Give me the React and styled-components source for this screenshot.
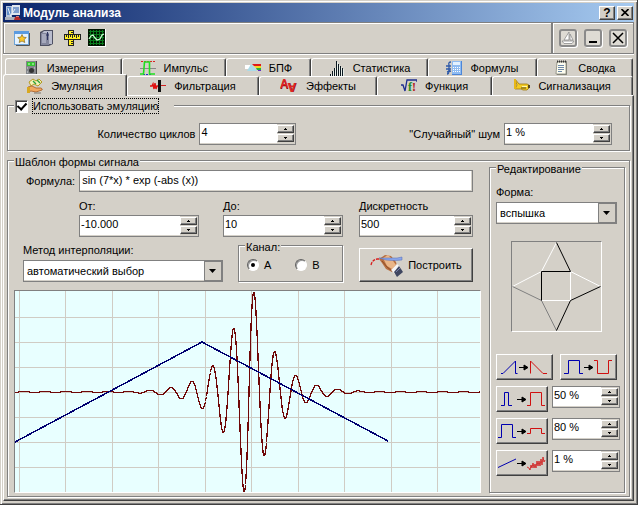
import React, { useState } from 'react';
import styled, { createGlobalStyle } from 'styled-components';

const GlobalStyle = createGlobalStyle`
  * {
    box-sizing: border-box;
  }

  body {
    margin: 0;
    background: #d4d0c8;
    color: #000;
    font-family: 'Liberation Sans', Arial, sans-serif;
    font-size: 11px;
    line-height: 14px;
  }

  button, input, select {
    font: inherit;
    color: inherit;
    margin: 0;
  }
`;

/* ---------- icons ---------- */

const Icon = ({ w = 16, h = 16, children }) => (
  <svg width={w} height={h} viewBox={`0 0 ${w} ${h}`} aria-hidden="true">{children}</svg>
);

const AppIcon = () => (
  <Icon>
    <rect x="1" y="1" width="6" height="11" fill="#b9c6dc" />
    <rect x="2" y="2" width="4" height="8" fill="#5f8cc8" />
    <rect x="7" y="0" width="8" height="10" fill="#dfe5ee" />
    <rect x="8" y="2" width="6" height="6" fill="#7f9fd0" />
    <path d="M0 12h11l1 3H0z" fill="#a9b0bd" />
    <path d="M3 3l3 9M6 10l4-6" stroke="#e8eef8" />
    <path d="M9 15l1-3h4l2 3z" fill="#b52a2a" />
    <path d="M11 11.500h3" stroke="#d88080" />
  </Icon>
);

const StarIcon = () => (
  <Icon>
    <path d="M2 15.500h13.500V3" fill="none" stroke="#555" />
    <rect x="0.500" y="1.500" width="14" height="13" fill="#e6f3ff" stroke="#6fa3d6" />
    <rect x="0" y="1" width="15" height="3" fill="#5b9be0" />
    <path d="M8 4.500l1.300 2.700 3 .3-2.200 2 .7 3L8 11l-2.800 1.500.7-3-2.200-2 3-.3z" fill="#ffc928" stroke="#8a6a1c" strokeWidth=".7" />
  </Icon>
);

const BookIcon = () => (
  <Icon>
    <path d="M1 2l4-2h9v14l-4 2H1z" fill="#4e5062" />
    <path d="M2 3h8v12H2z" fill="#83869c" />
    <path d="M5 1h8v13h-3V3H3z" fill="#b9bccd" />
    <path d="M4 4v9M6 4v9" stroke="#c9ccdc" />
    <path d="M8.500 2v8M7 5h3" stroke="#2e3560" />
  </Icon>
);

const RulerIcon = () => (
  <Icon w={17} h={16}>
    <rect x="4.500" y="0.500" width="5" height="15" fill="#ffee22" stroke="#222" />
    <path d="M7 11.500h2M7 13.500h2M7 2.500h2" stroke="#222" />
    <rect x="0.500" y="4.500" width="16" height="5" fill="#ffee22" stroke="#222" />
    <path d="M2.500 5v2M4.500 5v3M6.500 5v2M8.500 5v3M10.500 5v2M12.500 5v3M14.500 5v2" stroke="#222" />
  </Icon>
);

const ScopeIcon = () => (
  <Icon w={18} h={18}>
    <rect width="18" height="18" fill="#fff" />
    <rect width="17" height="17" fill="#001400" />
    <path d="M2.500 1v15M5.500 1v15M8.500 1v15M11.500 1v15M14.500 1v15M1 2.500h15M1 5.500h15M1 8.500h15M1 11.500h15M1 14.500h15" stroke="#087c1c" />
    <path d="M1 10l2-3 2-1 2 3 2 2 3-1 2-4 2-1" fill="none" stroke="#c8ffd0" strokeWidth="1.300" />
  </Icon>
);

const BoatIcon = () => (
  <Icon w={14} h={14}>
    <path d="M8 1v8H3zM9 3l3 6H9z" fill="#fff" stroke="#8c8c8c" strokeWidth=".8" />
    <path d="M1 10h12l-2 2.500H3z" fill="#fff" stroke="#8c8c8c" strokeWidth=".8" />
  </Icon>
);

const MinimizeIcon = () => (
  <Icon w={14} h={14}>
    <path d="M3 11h8" stroke="#000" strokeWidth="2" />
  </Icon>
);

const CrossIcon = () => (
  <Icon w={14} h={14}>
    <path d="M2 2l10 10M12 2L2 12" stroke="#000" strokeWidth="1.500" />
  </Icon>
);

const MeterIcon = () => (
  <Icon>
    <rect x="3" y="1" width="11" height="14" fill="#444" />
    <rect x="3" y="1" width="10" height="13" fill="#83868a" />
    <rect x="4" y="2" width="8" height="4" fill="#35c52f" />
    <path d="M5 4h2M9 4h2" stroke="#d2ffd0" />
    <circle cx="8.500" cy="10.500" r="2.500" fill="#333" />
    <path d="M4 8h1M12 8h-1M4 12h1" stroke="#ddd" />
  </Icon>
);

const PulseIcon = () => (
  <Icon>
    <path d="M0 8.500h16" stroke="#888" />
    <path d="M1 1.500h14" stroke="#e02020" strokeDasharray="2 1" />
    <path d="M3 14.500h8" stroke="#2030d0" strokeDasharray="2 1" />
    <path d="M0 14h3.500L4.500 2h5v12H15" fill="none" stroke="#20e020" strokeWidth="1.600" />
  </Icon>
);

const PrismIcon = () => (
  <Icon>
    <path d="M0 5h5l5 4H0z" fill="#fff" />
    <path d="M6 4l6 7H2z" fill="#a9dbe8" />
    <path d="M7 4h9v2H9z" fill="#e01818" />
    <path d="M9 6h7v2h-5z" fill="#f0d820" />
    <path d="M11 8h5v2h-4z" fill="#28b040" />
    <path d="M13 10.500h3" stroke="#6030c0" />
  </Icon>
);

const BarsIcon = () => (
  <Icon>
    <path d="M1.500 16v-2M3.500 16v-5M5.500 16V8M7.500 16V1M9.500 16V4M11.500 16V6M13.500 16V8" stroke="#0c1820" />
    <path d="M2.500 16v-2M4.500 16v-5M6.500 16V8M8.500 16V2M10.500 16V5M12.500 16V7M14.500 16V9" stroke="#e9efe9" />
  </Icon>
);

const FormulaIcon = () => (
  <Icon>
    <rect x="6" y="1" width="10" height="14" fill="#4d86d8" />
    <rect x="6" y="1" width="9" height="13" fill="#8fbcf2" />
    <rect x="7" y="2" width="7" height="3" fill="#e4f2ff" />
    <path d="M7 7.500h7M7 9.500h7M7 11.500h7" stroke="#fff" strokeDasharray="1 1" />
    <path d="M5 2q-3 0-2 3v6q0 3-2 3M0 6h5M0 9h5M1 12l4-1" fill="none" stroke="#2c58a8" strokeWidth="1.300" />
  </Icon>
);

const NotesIcon = () => (
  <Icon>
    <path d="M3 1h10v14H3z" fill="#8a8a80" />
    <path d="M3 2h9v12H2z" fill="#fdfdf0" stroke="#77776c" strokeWidth=".7" />
    <path d="M3 1.500h9" stroke="#333" strokeWidth="2" strokeDasharray="1 1" />
    <path d="M4 5.500h6M4 7.500h6M4 9.500h6M4 11.500h4" stroke="#6d88a8" />
  </Icon>
);

const EmulationIcon = () => (
  <Icon>
    <path d="M2 4l4-3 3 2 3-2 3 3-4 4-4-2-3 2z" fill="#f5f3b8" stroke="#b59a22" />
    <path d="M6 3l3 3M10 2l3 3" stroke="#2da238" strokeWidth="1.300" />
    <path d="M1 9l4-1 4 2h5q2 1 1 2l-6 2-5-1-3 1z" fill="#f1a860" stroke="#a45c24" strokeWidth=".8" />
    <path d="M0 9h3v6H0z" fill="#d8a820" />
    <path d="M7 15h7" stroke="#7a7770" />
  </Icon>
);

const FilterIcon = () => (
  <Icon>
    <path d="M0 8h2l1-2 1 5 1-6 1 6 1-3h2" fill="none" stroke="#e01010" strokeWidth="1.400" />
    <path d="M11 7.500h5" stroke="#d02020" />
    <rect x="8" y="2" width="3" height="12" fill="#111" />
  </Icon>
);

const EffectsIcon = () => (
  <Icon w={18}>
    <text x="0" y="11" fontSize="12" fontWeight="700" fontFamily="Liberation Sans, sans-serif" fill="#901010">A</text>
    <text x="0" y="10" fontSize="12" fontWeight="700" fontFamily="Liberation Sans, sans-serif" fill="#e02424">A</text>
    <text x="-17" y="-5" fontSize="12" fontWeight="700" fontFamily="Liberation Sans, sans-serif" fill="#901010" transform="rotate(180)">A</text>
    <text x="-16" y="-5" fontSize="12" fontWeight="700" fontFamily="Liberation Sans, sans-serif" fill="#e02424" transform="rotate(180)">A</text>
  </Icon>
);

const FunctionIcon = () => (
  <Icon>
    <path d="M0 7h2l2 6 2-11h10v2" fill="none" stroke="#1c2c90" strokeWidth="1.300" />
    <text x="7" y="13" fontSize="12" fontWeight="700" fontFamily="Liberation Serif, serif" fill="#1b8c28">f</text>
    <text x="11" y="13" fontSize="12" fontWeight="700" fontFamily="Liberation Serif, serif" fill="#b01818">!</text>
  </Icon>
);

const HornIcon = () => (
  <Icon>
    <path d="M1 1l4 5h8l2 1v3l-2 2H9l-2-1H1l2-4z" fill="#f4cc24" stroke="#a07a10" strokeWidth=".8" />
    <path d="M1 1v10" stroke="#e8b818" strokeWidth="2" />
    <path d="M8 8.500h5" stroke="#fff7b0" />
    <path d="M7 10h5" stroke="#5a4a18" />
    <path d="M14 7h2v3h-2z" fill="#5a4a18" />
  </Icon>
);

const HandIcon = () => (
  <Icon w={34} h={24}>
    <path d="M1 12q1-5 6-6h5" fill="none" stroke="#d81c1c" strokeWidth="1.300" strokeDasharray="3 1" />
    <path d="M9 6l6-4 6 1 5 6 1 4-5 6-6-3-4-6z" fill="#b86f40" />
    <path d="M13 5l5-3 3 3 5 7-4 4-5-3z" fill="#eab688" />
    <path d="M12 8l5 6 5 4" fill="none" stroke="#8f4f28" />
    <path d="M9 5h18l5-1v3q-8 1-16 0z" fill="#8aa6ec" stroke="#5269b0" strokeWidth=".5" />
    <path d="M21 17l6-6 3 3-5 7z" fill="#f6f6f6" />
    <path d="M24 19l5-6 4 6-6 5z" fill="#3f4660" />
    <path d="M26 19l4-4" stroke="#7780a8" />
  </Icon>
);

const Arrow = ({ x, y }) => (
  <path d={`M${x} ${y}.500h5M${x + 5} ${y - 2}v5l4-2.500z`} fill="#000" stroke="#000" strokeWidth="1" />
);

/* ---------- window frame ---------- */

const Window = styled.main`
  display: flex;
  flex-direction: column;
  min-height: 100vh;
  padding: 3px;
  border-right: 1px solid #404040;
  border-bottom: 1px solid #404040;
  box-shadow: inset 1px 1px 0 #d4d0c8, inset 2px 2px 0 #fff, inset -1px -1px 0 #808080;
`;

const TitleBar = styled.header`
  display: flex;
  align-items: center;
  gap: 2px;
  height: 19px;
  padding: 0 1px 0 2px;
  background: linear-gradient(to right, #0a246a, #a6caf0);
`;

const Title = styled.h1`
  flex: 1;
  margin: 0;
  color: #fff;
  font-size: 12px;
  line-height: 16px;
`;

const raised = `
  background: #d4d0c8;
  border: 1px solid;
  border-color: #fff #404040 #404040 #fff;
  box-shadow: inset -1px -1px 0 #808080;
`;

const CaptionButton = styled.button`
  ${raised}
  display: grid;
  place-items: center;
  width: 16px;
  height: 14px;
  padding: 0;
  font-size: 12px;
  font-weight: 700;
  line-height: 12px;
`;

const ToolBar = styled.div`
  display: flex;
  height: 33px;
`;

const ToolPanel = styled.div`
  display: flex;
  flex: ${({ $grow }) => ($grow ? 1 : 'none')};
  align-items: center;
  gap: ${({ $gap }) => $gap || 0}px;
  padding: 0 6px;
  border: 1px solid #808080;
  box-shadow: inset 1px 1px 0 #fff, 0 1px 0 #fff;
  margin-bottom: 1px;
`;

const ToolButton = styled.button`
  display: grid;
  place-items: center;
  width: 25px;
  height: 22px;
  padding: 0 1px 0 0;
  border: 0;
  background: none;
`;

const FrameButton = styled.button`
  display: grid;
  place-items: center;
  width: 18px;
  height: 18px;
  padding: 0;
  border: 2px solid #8a8a8a;
  border-radius: 3px;
  background: #dedbd4;
  box-shadow: 1px 1px 0 #fff;
`;

/* ---------- tabs ---------- */

const Tabs = styled.div`
  margin-top: 3px;
  padding-right: 1px;
`;

const TabRow = styled.div`
  display: flex;
  height: ${({ $back }) => ($back ? 18 : 19)}px;
  padding-left: ${({ $back }) => ($back ? 2 : 0)}px;
`;

const Tab = styled.button`
  display: flex;
  align-items: center;
  justify-content: center;
  gap: 8px;
  flex: ${({ $size }) => $size} 1 0;
  height: ${({ $active }) => ($active ? 22 : 19)}px;
  margin-top: ${({ $active }) => ($active ? -2 : 0)}px;
  position: relative;
  z-index: ${({ $active }) => ($active ? 1 : 0)};
  padding: 0;
  background: #d4d0c8;
  border: 1px solid;
  border-color: #fff #404040 transparent #fff;
  border-bottom: 0;
  border-radius: 3px 2px 0 0;
  box-shadow: inset -1px 0 0 #808080;
  white-space: nowrap;
`;

const TabPanel = styled.section`
  flex: 1;
  display: flex;
  flex-direction: column;
  gap: 1px;
  padding: 1px 3px 3px 3px;
  border: 1px solid;
  border-color: #fff #404040 #404040 #fff;
  box-shadow: inset -1px -1px 0 #808080;
`;

/* ---------- form parts ---------- */

const Group = styled.fieldset`
  min-width: 0;
  margin: 0;
  padding: 0;
  border: 1px solid #808080;
  box-shadow: inset 1px 1px 0 #fff, 1px 1px 0 #fff;
`;

const Legend = styled.legend`
  position: relative;
  margin-left: 6px;
  padding: 4px 1px 0;
  height: 16px;
  line-height: 12px;
  background: linear-gradient(transparent 6px, #d4d0c8 6px);
`;

const CheckLegend = styled(Legend)`
  padding: 2px 16px 0 1px;

  label {
    display: flex;
    align-items: center;
    gap: 5px;
    height: 14px;
  }

  span {
    outline: 1px dotted #000;
    line-height: 14px;
  }
`;

const CheckBox = styled.input`
  appearance: none;
  display: grid;
  place-items: center;
  width: 13px;
  height: 13px;
  background: #fff;
  border: 1px solid;
  border-color: #808080 #fff #fff #808080;
  box-shadow: inset 1px 1px 0 #404040;

  &:checked::after {
    content: '';
    width: 4px;
    height: 7px;
    margin-bottom: 2px;
    border: solid #000;
    border-width: 0 2px 2px 0;
    transform: rotate(42deg);
  }
`;

const Radio = styled.input`
  appearance: none;
  display: grid;
  place-items: center;
  width: 12px;
  height: 12px;
  border-radius: 50%;
  background: #fff;
  border: 1px solid;
  border-color: #606060 #fff #fff #606060;
  box-shadow: inset 1px 1px 0 #999;

  &:checked::after {
    content: '';
    width: 4px;
    height: 4px;
    border-radius: 50%;
    background: #000;
  }
`;

const CycleRow = styled.div`
  display: grid;
  grid-template-columns: 288fr 315fr;
  padding: 10px 17px 5px 0;
`;

const Labelled = styled.div`
  display: flex;
  align-items: center;
  justify-content: flex-end;
  gap: 4px;
`;

const Stacked = styled.div`
  display: flex;
  flex-direction: column;
  gap: ${({ $gap }) => $gap || 2}px;
`;

const TextBox = styled.input`
  flex: 1;
  min-width: 0;
  height: 22px;
  padding: 0 2px 3px 2px;
  background: #fff;
  border: 1px solid #808080;
  border-radius: 0;
  box-shadow: inset -1px -1px 0 #d4d0c8;
  outline: 0;
`;

const SpinBox = styled.div`
  display: flex;
  width: ${({ $width }) => ($width ? `${$width}px` : '100%')};
  height: 22px;
  padding: 0 1px 1px 0;
  background: #fff;
  border: 1px solid #808080;
  box-shadow: inset -1px -1px 0 #d4d0c8;

  input {
    flex: 1;
    width: 0;
    min-width: 0;
    padding: 0 0 3px 1px;
    border: 0;
    background: none;
    outline: 0;
  }
`;

const SpinButtons = styled.div`
  display: grid;
  grid-template-rows: 1fr 1fr;
  gap: 1px;
  width: 17px;
  padding: 1px 0;
  background: #d4d0c8;

  button {
    ${raised}
    display: grid;
    place-items: center;
    min-height: 0;
    padding: 0;
  }
`;

const SelectWrap = styled.div`
  position: relative;
  width: ${({ $width }) => ($width ? `${$width}px` : '100%')};

  select {
    appearance: none;
    display: block;
    width: 100%;
    height: 22px;
    padding: 0 20px 0 3px;
    background: #fff;
    border: 1px solid #808080;
    border-radius: 0;
    box-shadow: inset -1px -1px 0 #d4d0c8;
  }
`;

const SelectArrow = styled.span`
  position: absolute;
  top: 1px;
  right: 1px;
  bottom: 1px;
  display: grid;
  place-items: center;
  width: 18px;
  background: #d4d0c8;
  border: 1px solid #808080;
  pointer-events: none;
`;

/* ---------- signal template ---------- */

const TemplateBody = styled.div`
  display: flex;
  gap: 8px;
  padding: 2px 4px 3px 6px;
`;

const SignalColumn = styled.div`
  flex: 1;
  min-width: 0;
`;

const FormulaRow = styled.div`
  display: flex;
  align-items: center;
  gap: 4px;
  padding: 0 8px 0 12px;
`;

const RangeRow = styled.div`
  display: grid;
  grid-template-columns: 144fr 136fr 114fr;
  padding: 7px 8px 0 65px;
`;

const MethodRow = styled.div`
  display: grid;
  grid-template-columns: 215fr 121fr 114fr;
  align-items: end;
  padding: 0 8px 0 9px;
`;

const ChannelGroup = styled(Group)`
  width: 105px;
`;

const RadioRow = styled.div`
  display: flex;
  gap: 24px;
  height: 28px;
  padding: 2px 8px 6px;

  label {
    display: flex;
    align-items: center;
    gap: 5px;
  }
`;

const BuildButton = styled.button`
  ${raised}
  display: flex;
  align-items: center;
  justify-content: center;
  gap: 4px;
  height: 34px;
  padding: 0;
`;

const ChartFrame = styled.div`
  height: 203px;
  margin-top: 8px;
  border: 1px solid;
  border-color: #808080 #fff #fff #808080;
  background: #e8ffff;

  svg {
    display: block;
    width: 100%;
    height: 100%;
  }
`;

const EditGroup = styled(Group)`
  flex: none;
  width: 136px;
  margin-top: -11px;
`;

const EditBody = styled.div`
  padding: 10px 4px 0 6px;
`;

const StarBox = styled.div`
  width: 91px;
  height: 91px;
  margin: 17px auto 22px 15px;
  border: 1px solid;
  border-color: #808080 #fff #fff #808080;

  svg {
    display: block;
  }
`;

const EditRow = styled.div`
  display: flex;
  gap: ${({ $gap }) => $gap || 4}px;
  margin-bottom: 6px;
`;

const ShapeButton = styled.button`
  ${raised}
  display: grid;
  place-items: center;
  width: ${({ $wide }) => ($wide ? 57 : 52)}px;
  height: 26px;
  padding: 0;
`;

const backTabs = [
  { name: 'Измерения', icon: <MeterIcon />, size: 117 },
  { name: 'Импульс', icon: <PulseIcon />, size: 104 },
  { name: 'БПФ', icon: <PrismIcon />, size: 85 },
  { name: 'Статистика', icon: <BarsIcon />, size: 117 },
  { name: 'Формулы', icon: <FormulaIcon />, size: 109 },
  { name: 'Сводка', icon: <NotesIcon />, size: 96 },
];

const frontTabs = [
  { name: 'Эмуляция', icon: <EmulationIcon />, size: 124 },
  { name: 'Фильтрация', icon: <FilterIcon />, size: 132 },
  { name: 'Эффекты', icon: <EffectsIcon />, size: 118 },
  { name: 'Функция', icon: <FunctionIcon />, size: 115 },
  { name: 'Сигнализация', icon: <HornIcon />, size: 141 },
];

const Spin = ({ id, value, width, label }) => {
  const [text, setText] = useState(value);
  const step = (d) => setText(text.replace(/-?\d+/, (n) => String(Number(n) + d)));
  return (
    <SpinBox $width={width}>
      <input id={id} type="text" aria-label={label} value={text} onChange={(e) => setText(e.target.value)} />
      <SpinButtons>
        <button type="button" aria-label="Больше" onClick={() => step(1)}>
          <Icon w={3} h={2}><path d="M1 0h1v1h1v1H0V1h1z" /></Icon>
        </button>
        <button type="button" aria-label="Меньше" onClick={() => step(-1)}>
          <Icon w={3} h={2}><path d="M0 0h3v1H2v1H1V1H0z" /></Icon>
        </button>
      </SpinButtons>
    </SpinBox>
  );
};

const Select = ({ id, width, options }) => (
  <SelectWrap $width={width}>
    <select id={id}>
      {options.map((o) => <option key={o}>{o}</option>)}
    </select>
    <SelectArrow>
      <Icon w={8} h={4}><path d="M0 0h7L3.500 4z" /></Icon>
    </SelectArrow>
  </SelectWrap>
);

// sin(7x) * exp(-|x|) over -10..10, scaled to the full height of the plot
const wavePoints = () => {
  const points = [];
  for (let px = 0; px <= 465; px += 0.5) {
    const x = (px - 234) / 23.3;
    const v = Math.sin(7 * x) * Math.exp(-Math.abs(x)) * 124;
    points.push(`${px},${Math.max(0, Math.floor(101 - v)) + 0.5}`);
  }
  return points.join(' ');
};

const Chart = () => (
  <ChartFrame>
    <svg viewBox="0 0 465 201" preserveAspectRatio="none" shapeRendering="crispEdges" role="img">
      <g stroke="#d0ccc4">
        {[4, 50, 97, 143, 190, 236, 283, 329, 376, 422].map((x) => (
          <path key={x} d={`M${x}.500 0v201`} />
        ))}
        {[26, 51, 76, 101, 126, 151, 176].map((y) => (
          <path key={y} d={`M0 ${y}.500h465`} />
        ))}
      </g>
      <polyline points={wavePoints()} fill="none" stroke="#700808" strokeWidth="1.300" />
      <polyline points="0,151 187,51 373,150" fill="none" stroke="#000070" strokeWidth="1.500" />
    </svg>
  </ChartFrame>
);

const StarShape = () => (
  <svg width="89" height="89" viewBox="0 0 89 89" fill="none" aria-hidden="true">
    <path d="M44.500 0.500L29.500 29.500M29.500 29.500L0.500 44.500M58.500 29.500L88.500 44.500M58.500 29.500v29h-29" stroke="#fff" />
    <path d="M0.500 44.500L29.500 58.500L44.500 88.500" stroke="#808080" />
    <path d="M44.500 0.500L58.500 29.500h-29v29M88.500 44.500L58.500 58.500L44.500 88.500" stroke="#000" />
  </svg>
);

const App = () => {
  const [enabled, setEnabled] = useState(true);
  const [channel, setChannel] = useState('A');

  return (
    <>
      <GlobalStyle />
      <Window>
        <TitleBar>
          <AppIcon />
          <Title>Модуль анализа</Title>
          <CaptionButton type="button">?</CaptionButton>
          <CaptionButton type="button" aria-label="Закрыть">
            <Icon w={8} h={7}><path d="M0.500 0l7 7M7.500 0l-7 7" stroke="#000" strokeWidth="1.600" /></Icon>
          </CaptionButton>
        </TitleBar>

        <ToolBar>
          <ToolPanel $grow>
            <ToolButton type="button" aria-label="Избранное"><StarIcon /></ToolButton>
            <ToolButton type="button" aria-label="Журнал"><BookIcon /></ToolButton>
            <ToolButton type="button" aria-label="Линейка"><RulerIcon /></ToolButton>
            <ToolButton type="button" aria-label="Осциллограф"><ScopeIcon /></ToolButton>
          </ToolPanel>
          <ToolPanel $gap={7}>
            <FrameButton type="button" aria-label="Парусник"><BoatIcon /></FrameButton>
            <FrameButton type="button" aria-label="Свернуть"><MinimizeIcon /></FrameButton>
            <FrameButton type="button" aria-label="Закрыть"><CrossIcon /></FrameButton>
          </ToolPanel>
        </ToolBar>

        <Tabs role="tablist">
          <TabRow $back>
            {backTabs.map((t) => (
              <Tab key={t.name} type="button" role="tab" $size={t.size}>{t.icon}{t.name}</Tab>
            ))}
          </TabRow>
          <TabRow>
            {frontTabs.map((t, i) => (
              <Tab key={t.name} type="button" role="tab" aria-selected={i === 0} $size={t.size} $active={i === 0}>
                {t.icon}{t.name}
              </Tab>
            ))}
          </TabRow>
        </Tabs>

        <TabPanel>
          <Group>
            <CheckLegend>
              <label>
                <CheckBox type="checkbox" checked={enabled} onChange={() => setEnabled(!enabled)} />
                <span>Использовать эмуляцию</span>
              </label>
            </CheckLegend>
            <CycleRow>
              <Labelled>
                <label htmlFor="cycles">Количество циклов</label>
                <Spin id="cycles" value="4" width={97} />
              </Labelled>
              <Labelled>
                <label htmlFor="noise">"Случайный" шум</label>
                <Spin id="noise" value="1 %" width={108} />
              </Labelled>
            </CycleRow>
          </Group>

          <Group>
            <Legend>Шаблон формы сигнала</Legend>
            <TemplateBody>
              <SignalColumn>
                <FormulaRow>
                  <label htmlFor="formula">Формула:</label>
                  <TextBox id="formula" type="text" defaultValue="sin (7*x) * exp (-abs (x))" />
                </FormulaRow>
                <RangeRow>
                  <Stacked>
                    <label htmlFor="from">От:</label>
                    <Spin id="from" value="-10.000" width={120} />
                  </Stacked>
                  <Stacked>
                    <label htmlFor="to">До:</label>
                    <Spin id="to" value="10" width={120} />
                  </Stacked>
                  <Stacked>
                    <label htmlFor="steps">Дискретность</label>
                    <Spin id="steps" value="500" />
                  </Stacked>
                </RangeRow>
                <MethodRow>
                  <Stacked $gap={3}>
                    <label htmlFor="method">Метод интерполяции:</label>
                    <Select id="method" width={200} options={['автоматический выбор']} />
                  </Stacked>
                  <ChannelGroup>
                    <Legend>Канал:</Legend>
                    <RadioRow>
                      {['A', 'B'].map((c) => (
                        <label key={c}>
                          <Radio type="radio" name="channel" checked={channel === c} onChange={() => setChannel(c)} />
                          {c}
                        </label>
                      ))}
                    </RadioRow>
                  </ChannelGroup>
                  <BuildButton type="button"><HandIcon />Построить</BuildButton>
                </MethodRow>
                <Chart />
              </SignalColumn>

              <EditGroup>
                <Legend>Редактирование</Legend>
                <EditBody>
                  <Stacked $gap={3}>
                    <label htmlFor="shape">Форма:</label>
                    <Select id="shape" width={121} options={['вспышка']} />
                  </Stacked>
                  <StarBox><StarShape /></StarBox>
                  <EditRow $gap={7}>
                    <ShapeButton type="button" $wide aria-label="Отразить по горизонтали">
                      <Icon w={51} h={18}>
                        <path d="M2 15.500h2L16.500 3v12.500h2" fill="none" stroke="#0000b0" />
                        <Arrow x={20} y={9} />
                        <path d="M31.500 15.500V3L44 15.500h4" fill="none" stroke="#d01010" />
                      </Icon>
                    </ShapeButton>
                    <ShapeButton type="button" $wide aria-label="Отразить по вертикали">
                      <Icon w={51} h={18}>
                        <path d="M1 15.500h4.500v-13h11v13H20" fill="none" stroke="#0000b0" />
                        <Arrow x={21} y={9} />
                        <path d="M31 2.500h3.500v13h11v-13H49" fill="none" stroke="#d01010" />
                      </Icon>
                    </ShapeButton>
                  </EditRow>
                  <EditRow>
                    <ShapeButton type="button" aria-label="Ширина">
                      <Icon w={48} h={18}>
                        <path d="M3 15.500h3.500v-13h4v13H14" fill="none" stroke="#0000b0" />
                        <Arrow x={19} y={9} />
                        <path d="M29 15.500h3.500v-13h11v13H47" fill="none" stroke="#d01010" />
                      </Icon>
                    </ShapeButton>
                    <Spin value="50 %" label="Ширина, %" width={68} />
                  </EditRow>
                  <EditRow>
                    <ShapeButton type="button" aria-label="Амплитуда">
                      <Icon w={48} h={18}>
                        <path d="M0 15.500h3.500v-13h11v13H18" fill="none" stroke="#0000b0" />
                        <Arrow x={19} y={9} />
                        <path d="M29 11.500h3.500v-5h11v5H47" fill="none" stroke="#d01010" />
                      </Icon>
                    </ShapeButton>
                    <Spin value="80 %" label="Амплитуда, %" width={68} />
                  </EditRow>
                  <EditRow>
                    <ShapeButton type="button" aria-label="Шум">
                      <Icon w={48} h={18}>
                        <path d="M0 13.500L18 5" fill="none" stroke="#0000b0" />
                        <Arrow x={19} y={9} />
                        <path d="M29 13l2 1 1 2 1-5 1 3 1-5 1 5 1-4 1 4 1-7 1 5 1-5 1 5 1-7 1 6 1-8 1 5 1-2" fill="none" stroke="#d01010" strokeWidth=".8" />
                      </Icon>
                    </ShapeButton>
                    <Spin value="1 %" label="Шум, %" width={68} />
                  </EditRow>
                </EditBody>
              </EditGroup>
            </TemplateBody>
          </Group>
        </TabPanel>
      </Window>
    </>
  );
};

export default App;
